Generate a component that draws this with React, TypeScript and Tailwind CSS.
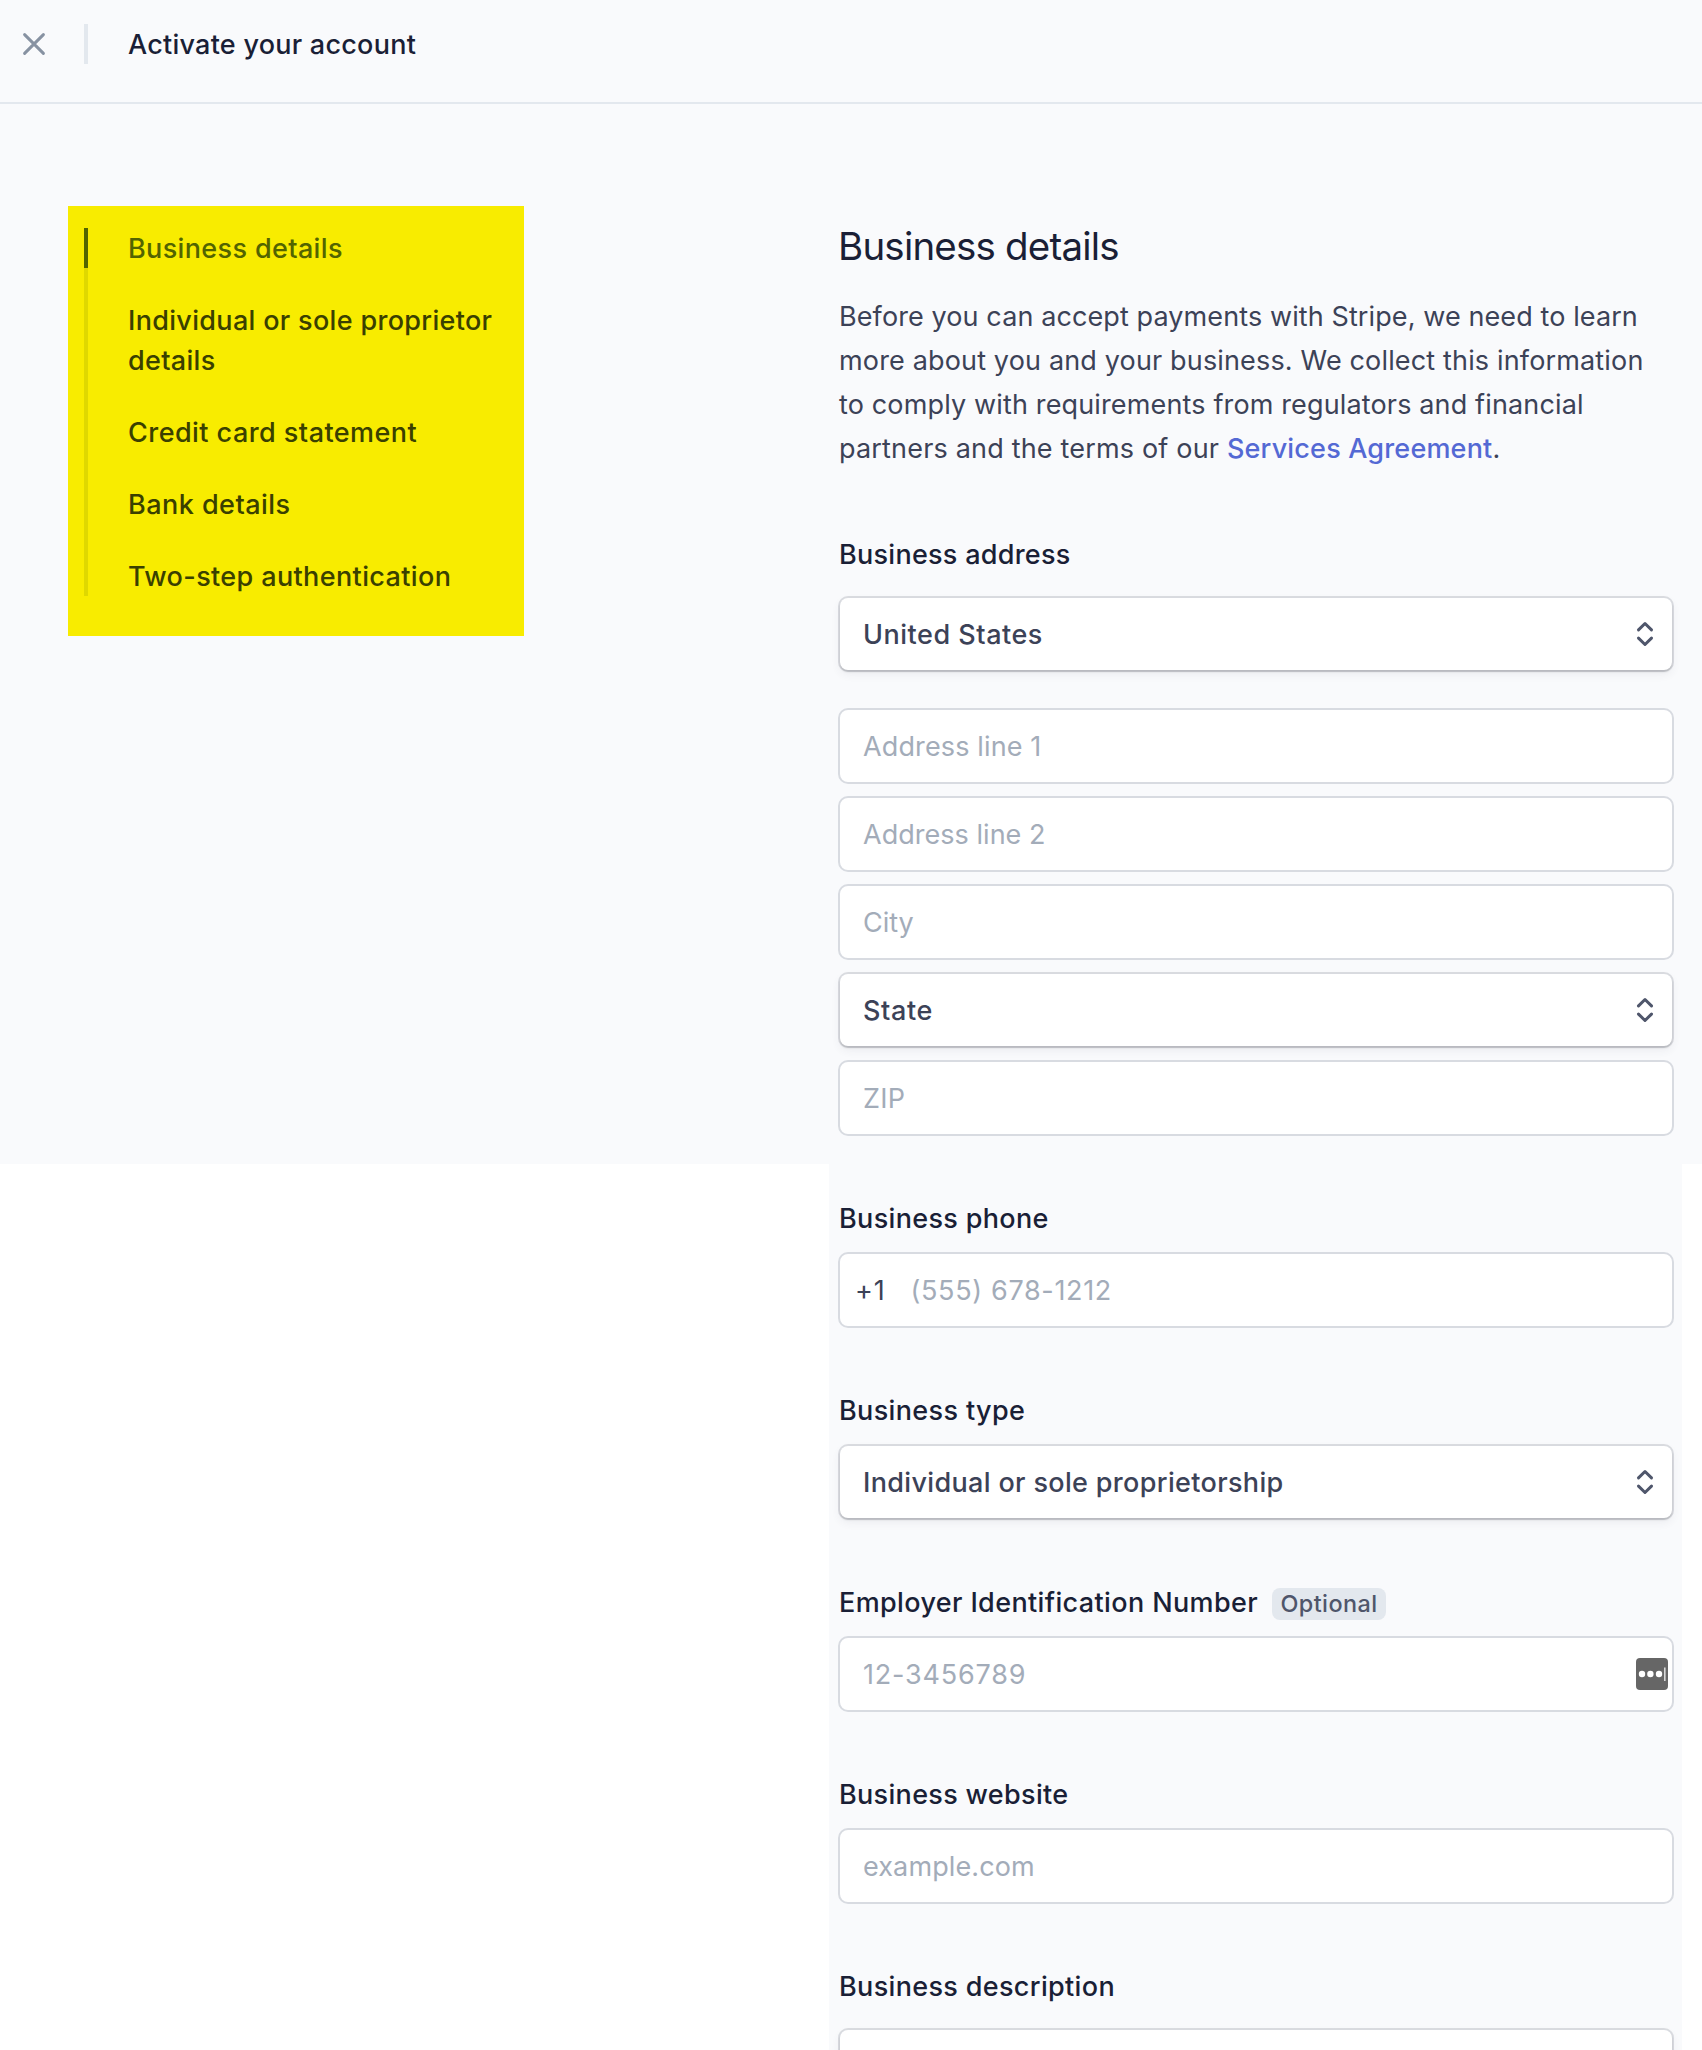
import React from "react";

const medium = "text-[27px] font-medium leading-[40px] whitespace-nowrap";
const regular = "text-[27px] font-normal leading-[40px] whitespace-nowrap";

function CloseIcon() {
  return (
    <svg width="24" height="24" viewBox="0 0 24 24" fill="none" stroke="#8792a2" strokeWidth="3" strokeLinecap="round">
      <path d="M2.6 2.6 21.4 21.4M21.4 2.6 2.6 21.4" />
    </svg>
  );
}

function ChevronsIcon() {
  return (
    <svg
      width="18"
      height="26"
      viewBox="0 0 18 26"
      fill="none"
      stroke="#4f566b"
      strokeWidth="3"
      strokeLinecap="round"
      strokeLinejoin="round"
    >
      <path d="M2.5 8.9 9 2.5l6.5 6.4M2.5 17.1 9 23.5l6.5-6.4" />
    </svg>
  );
}

function PasswordManagerIcon() {
  return (
    <svg width="32" height="32" viewBox="0 0 32 32">
      <rect width="32" height="32" rx="4" fill="#666666" />
      <circle cx="6" cy="16" r="3.2" fill="#ffffff" />
      <circle cx="14.4" cy="16" r="3.2" fill="#ffffff" />
      <circle cx="23" cy="16" r="3.2" fill="#ffffff" />
      <rect x="28" y="9.5" width="1.6" height="13.5" fill="#d8d8d8" />
    </svg>
  );
}

function Step({ label, tracking, active = false }: { label: React.ReactNode; tracking: string; active?: boolean }) {
  return (
    <li
      className={`${medium} ${tracking} border-l-4 pl-[40px] ${
        active ? "border-[#526400] text-[#526400]" : "border-transparent text-[#3a4000]"
      }`}
    >
      <span className="block translate-y-px">{label}</span>
    </li>
  );
}

function Label({ text, tracking, children }: { text: string; tracking: string; children?: React.ReactNode }) {
  return (
    <div className="flex h-10 items-center pl-px">
      <span className={`${medium} ${tracking} translate-y-px text-[#1a1f36]`}>{text}</span>
      {children}
    </div>
  );
}

function Field({ text, tracking, children }: { text?: string; tracking?: string; children?: React.ReactNode }) {
  return (
    <div className="flex h-[76px] items-center justify-between rounded-[10px] border-2 border-[#d8dbe1] bg-white pl-[23px] pr-1">
      {text && <span className={`${regular} ${tracking} translate-y-px text-[#a3acb9]`}>{text}</span>}
      {children}
    </div>
  );
}

function Select({ text, tracking }: { text?: string; tracking?: string }) {
  return (
    <div className="px-0.5 py-0.5">
      <div className="flex h-[72px] items-center justify-between rounded-lg bg-white pl-[23px] pr-[18.5px] shadow-[0_2px_2px_0_rgba(0,0,0,0.12),0_0_0_2px_rgba(60,66,87,0.16),0_4px_10px_0_rgba(60,66,87,0.08)]">
        <span className={`${medium} ${tracking} translate-y-px text-[#3c4257]`}>{text}</span>
        <ChevronsIcon />
      </div>
    </div>
  );
}

export default function App() {
  return (
    <div className="flex h-[2050px] w-[1702px] flex-col overflow-hidden bg-white bg-[linear-gradient(#f9fafc,#f9fafc)] bg-[length:100%_1164px] bg-no-repeat font-['Inter',sans-serif]">
      <header className="flex h-[104px] shrink-0 items-start border-b-2 border-[#e3e8ee] pt-6">
        <div className="flex h-10 items-center">
          <button className="ml-[22px] flex h-10 items-center">
            <CloseIcon />
          </button>
          <div className="ml-[38px] h-10 w-1 bg-[#e3e8ee]" />
          <h1 className={`${medium} ml-10 translate-y-px tracking-[0.25px] text-[#1a1f36]`}>Activate your account</h1>
        </div>
      </header>

      <div className="flex flex-1 items-start">
        <nav className="ml-[68px] mt-[102px] h-[430px] w-[456px] bg-[#f8ec00] pl-4 pt-[22px]">
          <ul className="flex w-[440px] flex-col gap-8 bg-[linear-gradient(#dfd800,#dfd800)] bg-[length:4px_100%] bg-no-repeat">
            <Step active label="Business details" tracking="tracking-[0.36px]" />
            <Step
              label={
                <>
                  Individual or sole proprietor
                  <br />
                  details
                </>
              }
              tracking="tracking-[0.32px]"
            />
            <Step label="Credit card statement" tracking="tracking-[0.45px]" />
            <Step label="Bank details" tracking="tracking-[0.47px]" />
            <Step label="Two-step authentication" tracking="tracking-[0.37px]" />
          </ul>
        </nav>

        <main className="ml-[305px] h-[1946px] w-[853px] bg-[#f9fafc] pl-[9px] pr-2 pt-[114px]">
          <h2 className="whitespace-nowrap text-[38.5px] font-normal leading-[56px] tracking-[-0.8px] text-[#1a1f36]">
            Business details
          </h2>
          <p className="mt-[21px] whitespace-nowrap pl-px text-[27px] leading-[44px] text-[#3c4257]">
            <span className="tracking-[0.1px]">Before you can accept payments with Stripe, we need to learn</span>
            <br />
            <span className="tracking-[0.155px]">more about you and your business. We collect this information</span>
            <br />
            <span className="tracking-[0.145px]">to comply with requirements from regulators and financial</span>
            <br />
            <span className="tracking-[0.18px]">partners and the terms of our </span>
            <a className="font-medium tracking-[0.18px] text-[#5469d4]">Services Agreement</a>.
          </p>

          <section className="mt-[63px]">
            <Label text="Business address" tracking="tracking-[0.27px]" />
            <div className="mt-[22px]">
              <Select text="United States" tracking="tracking-[0.52px]" />
            </div>
            <div className="mt-9 flex flex-col gap-3">
              <Field text="Address line 1" tracking="tracking-[0.13px]" />
              <Field text="Address line 2" tracking="tracking-[0.03px]" />
              <Field text="City" tracking="tracking-normal" />
              <Select text="State" tracking="tracking-[0.6px]" />
              <Field text="ZIP" tracking="tracking-[0.3px]" />
            </div>
          </section>

          <section className="mt-[62px] flex flex-col gap-3.5">
            <Label text="Business phone" tracking="tracking-[0.33px]" />
            <div className="flex h-[76px] items-center rounded-[10px] border-2 border-[#d8dbe1] bg-white pl-[15px]">
              <span className={`${regular} w-[55.5px] translate-y-px tracking-[0.8px] text-[#3c4257]`}>+1</span>
              <span className={`${regular} translate-y-px tracking-[0.66px] text-[#a3acb9]`}>(555) 678-1212</span>
            </div>
          </section>

          <section className="mt-[62px] flex flex-col gap-3.5">
            <Label text="Business type" tracking="tracking-[0.36px]" />
            <Select text="Individual or sole proprietorship" tracking="tracking-[0.34px]" />
          </section>

          <section className="mt-[62px] flex flex-col gap-3.5">
            <Label text="Employer Identification Number" tracking="tracking-[0.37px]">
              <span className="ml-3.5 mt-1 flex h-8 w-[114px] items-center justify-center rounded-lg bg-[#e3e8ee] text-[23.4px] font-medium leading-8 tracking-[0.45px] text-[#4f566b]">
                Optional
              </span>
            </Label>
            <Field text="12-3456789" tracking="tracking-[0.82px]">
              <PasswordManagerIcon />
            </Field>
          </section>

          <section className="mt-[62px] flex flex-col gap-3.5">
            <Label text="Business website" tracking="tracking-[0.32px]" />
            <Field text="example.com" tracking="tracking-[0.12px]" />
          </section>

          <section className="mt-[62px] flex flex-col gap-[22px]">
            <Label text="Business description" tracking="tracking-[0.34px]" />
            <div className="px-0.5 pt-0.5">
              <div className="h-[120px] rounded-lg bg-white shadow-[0_2px_2px_0_rgba(0,0,0,0.12),0_0_0_2px_rgba(60,66,87,0.16),0_4px_10px_0_rgba(60,66,87,0.08)]" />
            </div>
          </section>
        </main>
      </div>
    </div>
  );
}
